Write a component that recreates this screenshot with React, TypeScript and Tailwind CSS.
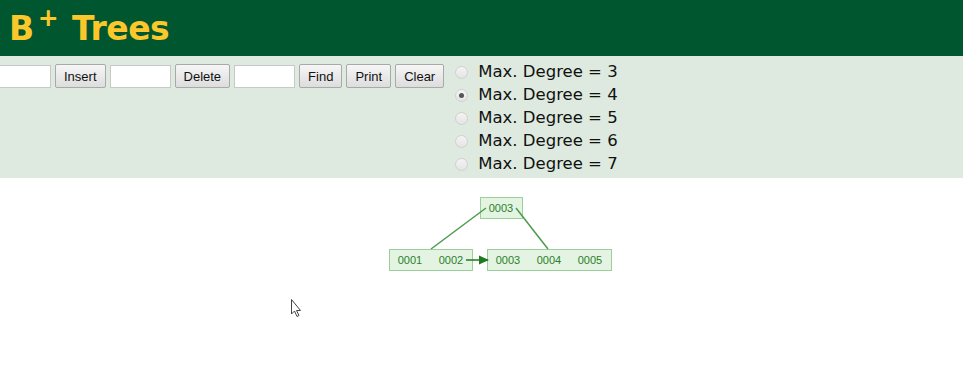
import React from "react";

const degrees = [3, 4, 5, 6, 7];

function Btn({ label }: { label: string }) {
  return (
    <button className="h-[24px] px-[8px] border border-[#a9a9a9] rounded-[2px] bg-gradient-to-b from-[#f6f6f6] to-[#dddddd] text-[13px] text-[#111] leading-none" style={{ fontFamily: '"Liberation Sans", Arial, sans-serif' }}>
      {label}
    </button>
  );
}

function Field() {
  return <input className="h-[23px] w-[61px] border border-[#c8c8c8] bg-white" />;
}

export default function App() {
  return (
    <div className="w-[963px] h-[372px] bg-white overflow-hidden relative" style={{ fontFamily: '"DejaVu Sans", Verdana, sans-serif' }}>
      <div className="h-[56px] bg-[#00572f] flex items-center pl-[9px]">
        <h1 className="text-[#fcc72b] font-bold text-[33px] leading-none tracking-[-0.5px] flex items-start">
          <span>B</span>
          <span className="text-[25px] leading-none ml-[4px] mt-[-7px]">+</span>
          <span className="ml-[14px]">Trees</span>
        </h1>
      </div>
      <div className="h-[122px] bg-[#deeadf] flex items-start">
        <div className="flex items-center gap-[4px] ml-[-10px] mt-[8px]">
          <Field />
          <Btn label="Insert" />
          <Field />
          <Btn label="Delete" />
          <Field />
          <Btn label="Find" />
          <Btn label="Print" />
          <Btn label="Clear" />
        </div>
        <div className="flex flex-col ml-[11px] mt-[5px]">
          {degrees.map((d) => (
            <label key={d} className="flex items-center h-[23px] text-[16.5px] text-[#111]">
              <span className="w-[13px] h-[13px] rounded-full border border-[#d0d0d0] bg-gradient-to-b from-[#f4f4f4] to-[#e4e4e4] flex items-center justify-center mr-[10px]">
                {d === 4 && <span className="w-[5px] h-[5px] rounded-full bg-[#555]" />}
              </span>
              Max. Degree = {d}
            </label>
          ))}
        </div>
      </div>
      <svg className="absolute left-0 top-0" width="963" height="372" style={{ fontFamily: '"Liberation Sans", Arial, sans-serif' }}>
        <defs>
          <marker id="arr" markerWidth="10" markerHeight="10" refX="9" refY="5" orient="auto" markerUnits="userSpaceOnUse">
            <path d="M0,0.5 L10,5 L0,9.5 Z" fill="#1f7a1f" />
          </marker>
        </defs>
        <rect x="480.5" y="197.5" width="42" height="21" fill="#e4f4e2" stroke="#9bd09a" />
        <text x="501" y="212" textAnchor="middle" fontSize="11" fill="#2a7f2a">0003</text>
        <rect x="389.5" y="249.5" width="83" height="21" fill="#e4f4e2" stroke="#9bd09a" />
        <text x="410" y="264" textAnchor="middle" fontSize="11" fill="#2a7f2a">0001</text>
        <text x="451" y="264" textAnchor="middle" fontSize="11" fill="#2a7f2a">0002</text>
        <rect x="487.5" y="249.5" width="124" height="21" fill="#e4f4e2" stroke="#9bd09a" />
        <text x="508" y="264" textAnchor="middle" fontSize="11" fill="#2a7f2a">0003</text>
        <text x="549" y="264" textAnchor="middle" fontSize="11" fill="#2a7f2a">0004</text>
        <text x="590" y="264" textAnchor="middle" fontSize="11" fill="#2a7f2a">0005</text>
        <line x1="486" y1="208" x2="431" y2="249" stroke="#4d9a4d" strokeWidth="1.5" />
        <line x1="516" y1="208" x2="548" y2="249" stroke="#4d9a4d" strokeWidth="1.5" />
        <line x1="466" y1="260" x2="488" y2="260" stroke="#1f7a1f" strokeWidth="1.5" markerEnd="url(#arr)" />
        <path d="M291.5,299.5 L291.5,314 L294.5,311 L297,316.5 L299,315.5 L296.5,310.5 L300.5,310.5 Z" fill="#fff" stroke="#444" strokeWidth="1" />
      </svg>
    </div>
  );
}
